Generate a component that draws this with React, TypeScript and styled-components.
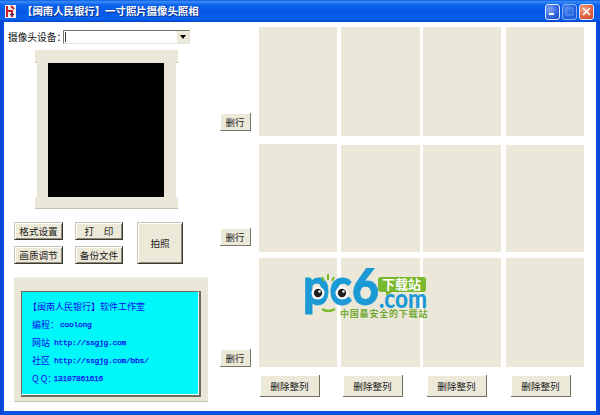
import React from "react";
import styled, { createGlobalStyle } from "styled-components";

const Global = createGlobalStyle`
  html, body { margin: 0; padding: 0; background: #fff; }
  body { font-family: "Noto Sans CJK SC", "Liberation Sans", sans-serif; }
`;

const Win = styled.div`
  position: relative;
  width: 600px;
  height: 415px;
  display: flex;
  flex-direction: column;
  overflow: hidden;
  background: linear-gradient(90deg, #0a3fd0 0, #0a55e4 4px, #0a55e4 596px, #0a3fd0 100%);
`;
const TitleBar = styled.div`
  height: 22px;
  flex: none;
  box-sizing: border-box;
  display: flex;
  align-items: center;
  padding: 0 6px 0 5px;
  gap: 6px;
  background: linear-gradient(180deg, #0a5ae6 0%, #3a8cf6 8%, #0a62ea 22%, #0558e6 60%, #0a62ee 85%, #0446cf 100%);
`;
const TitleText = styled.span`
  color: #fff;
  font-size: 10.4px;
  font-weight: 700;
  line-height: 14px;
  white-space: nowrap;
  text-shadow: 1px 1px 0 #0a2f90;
  flex: 1;
`;
const WinButtons = styled.div`
  display: flex;
  gap: 2px;
  margin-top: 1px;
`;
const WinBtn = styled.div<{ $close?: boolean; $off?: boolean }>`
  width: 15px;
  height: 16px;
  box-sizing: border-box;
  border: 1px solid #dfe8fb;
  border-radius: 3px;
  display: flex;
  align-items: center;
  justify-content: center;
  opacity: ${(p) => (p.$off ? 0.6 : 1)};
  background: ${(p) =>
    p.$close
      ? "radial-gradient(circle at 30% 30%, #f0a088, #e0603a 60%, #c8401f)"
      : "radial-gradient(circle at 30% 30%, #7fa4f4, #2f62e0 60%, #2450c8)"};
`;
const Client = styled.div`
  flex: none;
  margin: 0 4px;
  height: 389px;
  background: #fff;
  display: flex;
`;
const Left = styled.div`
  width: 216px;
  flex: none;
  box-sizing: border-box;
  padding: 8px 0 0 4px;
  display: flex;
  flex-direction: column;
`;
const DeviceRow = styled.div`
  display: flex;
  align-items: center;
  height: 14px;
`;
const DeviceLabel = styled.span`
  width: 55px;
  font-size: 9.7px;
  color: #111;
  white-space: nowrap;
`;
const Select = styled.div`
  width: 127px;
  height: 14px;
  box-sizing: border-box;
  border: 1px solid;
  border-color: #77756a #e6e4d8 #e6e4d8 #77756a;
  background: #fff;
  display: flex;
  justify-content: flex-end;
`;
const Caret = styled.span`
  width: 1px;
  height: 10px;
  margin: 1px auto 0 1px;
  background: #333;
`;
const Arrow = styled.div`
  width: 12px;
  background: #ece9d8;
  border-left: 1px solid #fff;
  display: flex;
  align-items: center;
  justify-content: center;
  &::after {
    content: "";
    border-left: 3px solid transparent;
    border-right: 3px solid transparent;
    border-top: 4px solid #000;
  }
`;
const PhotoFrame = styled.div`
  margin: 6px 0 0 27px;
  width: 143px;
  height: 158px;
  display: flex;
  flex-direction: column;
  align-items: center;
`;
const FrameBar = styled.div<{ $h: number }>`
  flex: none;
  width: 143px;
  height: ${(p) => p.$h}px;
  background: #ebe8da;
  box-shadow: 0 1px 0 #c4c1b2;
`;
const FrameMid = styled.div`
  flex: none;
  width: 139px;
  height: 135px;
  box-sizing: border-box;
  padding: 1px 12px 0 11px;
  background: #e9e6d8;
`;
const Screen = styled.div`
  width: 116px;
  height: 134px;
  background: #000;
`;
const Buttons = styled.div`
  margin: 14px 0 0 6px;
  display: grid;
  grid-template-columns: 49px 48px 48px;
  grid-template-rows: 18px 18px;
  column-gap: 12px;
  row-gap: 6px;
  & > :nth-child(3) { margin-left: 2px; grid-row: 1 / span 2; grid-column: 3; }
`;
const DarkBtn = styled.div`
  box-sizing: border-box;
  background: #ece9d8;
  border: 1px solid;
  border-color: #c8c5b4 #3c3a30 #3c3a30 #c8c5b4;
  box-shadow: inset 1px 1px 0 #fff, inset -1px -1px 0 #8e8b7c;
  display: flex;
  align-items: center;
  justify-content: center;
  font-size: 9.6px;
  color: #1a1a1a;
  white-space: pre;
`;
const Info = styled.div`
  margin: 13px 0 0 6px;
  width: 194px;
  height: 125px;
  box-sizing: border-box;
  padding: 13px 9px 7px 7px;
  background: #e9e6d8;
  border-top: 1px solid #f5f3ea;
  border-bottom: 1px solid #c8c5b4;
  display: flex;
`;
const CyanBox = styled.div`
  width: 178px;
  height: 104px;
  box-sizing: border-box;
  padding: 5px 0 0 6px;
  background: #00f8fb;
  border: 1px solid;
  border-color: #6c6a5c #fff #fff #6c6a5c;
  box-shadow: 1px 1px 0 1px #6c6a5c;
  color: #0a0af0;
  display: flex;
  flex-direction: column;
`;
const InfoLine = styled.div<{ $indent?: number }>`
  height: 18.2px;
  flex: none;
  padding-left: ${(p) => p.$indent ?? 4}px;
  display: flex;
  align-items: center;
  font-size: 9px;
  white-space: pre;
`;
const Mono = styled.span<{ $gap: number }>`
  font-family: "Liberation Mono", monospace;
  font-size: 8px;
  -webkit-text-stroke: 0.25px #0a0af0;
  letter-spacing: -0.3px;
  margin-left: ${(p) => p.$gap}px;
`;
const Right = styled.div`
  flex: none;
  width: 368px;
  padding-top: 5px;
  display: grid;
  grid-template-columns: 39px 82px 82px 83px 78px;
  grid-template-rows: 109px 110px 109px 24px;
  row-gap: 6px;
`;
const Cell = styled.div<{ $w: number; $top: number }>`
  width: ${(p) => p.$w}px;
  margin-top: ${(p) => p.$top}px;
  background: #ebe8da;
`;
const RowBtn = styled.div<{ $bottom: number }>`
  align-self: end;
  width: 31px;
  height: 18px;
  margin-bottom: ${(p) => p.$bottom}px;
  box-sizing: border-box;
  background: #ece9d8;
  border-right: 1px solid #77756a;
  border-bottom: 1px solid #77756a;
  box-shadow: inset 1px 1px 0 #fff;
  display: flex;
  align-items: center;
  justify-content: center;
  font-size: 9.4px;
  color: #1a1a1a;
`;
const ColBtn = styled.div<{ $left: number }>`
  width: 60px;
  height: 22px;
  margin: 2px 0 0 ${(p) => p.$left}px;
  box-sizing: border-box;
  background: #ece9d8;
  border-right: 1px solid #6f6d60;
  border-bottom: 1px solid #6f6d60;
  box-shadow: inset 1px 1px 0 #fff;
  display: flex;
  align-items: center;
  justify-content: center;
  font-size: 9.6px;
  color: #1a1a1a;
  white-space: nowrap;
`;
const Spacer = styled.div``;
const Logo = styled.svg`
  position: absolute;
  left: 300px;
  top: 268px;
`;

const AppIcon = () => (
  <svg width="11" height="13" viewBox="0 0 11 13" style={{ flex: "none" }}>
    <rect width="11" height="13" fill="#f4efe8" />
    <path d="M2 1v11M2 6h5v6M6 1l3 3" stroke="#c8202a" strokeWidth="2" fill="none" />
    <path d="M5 9.5h4" stroke="#20307a" strokeWidth="1.4" />
  </svg>
);

const rows = [
  { bottom: 5, first: 0, rest: 0 },
  { bottom: 6, first: 2, rest: 3 },
  { bottom: 0, first: 0, rest: 0 },
];

export default function App() {
  return (
    <Win>
      <Global />
      <TitleBar>
        <AppIcon />
        <TitleText>【闽南人民银行】一寸照片摄像头照相</TitleText>
        <WinButtons>
          <WinBtn>
            <svg width="9" height="9"><rect x="1" y="6" width="5" height="2" fill="#fff" /></svg>
          </WinBtn>
          <WinBtn $off>
            <svg width="9" height="9"><rect x="1" y="1" width="7" height="7" fill="none" stroke="#9fb8f0" /></svg>
          </WinBtn>
          <WinBtn $close>
            <svg width="9" height="9"><path d="M1 1l7 7M8 1l-7 7" stroke="#fff" strokeWidth="1.6" /></svg>
          </WinBtn>
        </WinButtons>
      </TitleBar>
      <Client>
        <Left>
          <DeviceRow>
            <DeviceLabel>摄像头设备：</DeviceLabel>
            <Select>
              <Caret />
              <Arrow />
            </Select>
          </DeviceRow>
          <PhotoFrame>
            <FrameBar $h={12} />
            <FrameMid>
              <Screen />
            </FrameMid>
            <FrameBar $h={11} />
          </PhotoFrame>
          <Buttons>
            <DarkBtn>格式设置</DarkBtn>
            <DarkBtn>打　印</DarkBtn>
            <DarkBtn>拍照</DarkBtn>
            <DarkBtn>画质调节</DarkBtn>
            <DarkBtn>备份文件</DarkBtn>
          </Buttons>
          <Info>
            <CyanBox>
              <InfoLine $indent={0}>【闽南人民银行】软件工作室</InfoLine>
              <InfoLine>编程：<Mono $gap={1}>coolong</Mono></InfoLine>
              <InfoLine>网站<Mono $gap={4}>http://ssgjg.com</Mono></InfoLine>
              <InfoLine>社区<Mono $gap={4}>http://ssgjg.com/bbs/</Mono></InfoLine>
              <InfoLine>Q Q：<Mono $gap={-3}>13107861616</Mono></InfoLine>
            </CyanBox>
          </Info>
        </Left>
        <Right>
          {rows.map((r, i) => (
            <React.Fragment key={i}>
              <RowBtn $bottom={r.bottom}>删行</RowBtn>
              {[0, 1, 2, 3].map((j) => (
                <Cell key={j} $w={j === 1 ? 79 : 78} $top={j === 0 ? r.first : r.rest} />
              ))}
            </React.Fragment>
          ))}
          <Spacer />
          <ColBtn $left={1}>删除整列</ColBtn>
          <ColBtn $left={2}>删除整列</ColBtn>
          <ColBtn $left={4}>删除整列</ColBtn>
          <ColBtn $left={5}>删除整列</ColBtn>
        </Right>
      </Client>
      <Logo width="130" height="55" viewBox="0 0 130 55">
        <text x="3" y="37" fontFamily="Lato" fontWeight="900" fontSize="52" fill="#1b9ad6" stroke="#1b9ad6" strokeWidth="0.8" textLength="76" lengthAdjust="spacingAndGlyphs">pc6</text>
        <circle cx="18" cy="25" r="6.5" fill="#fff" />
        <circle cx="42" cy="25" r="6.5" fill="#fff" />
        <circle cx="18" cy="25" r="4.2" fill="#1f1f1f" />
        <circle cx="42" cy="25" r="4.2" fill="#1f1f1f" />
        <circle cx="19.5" cy="23.5" r="1.2" fill="#fff" />
        <circle cx="43.5" cy="23.5" r="1.2" fill="#fff" />
        <path d="M22 9l2 4M28 6v6M34 9l-2 4" stroke="#7ab82e" strokeWidth="2" fill="none" />
        <path d="M22 41q6 4 13 0" stroke="#7ab82e" strokeWidth="2.4" fill="none" />
        <path d="M81 9h42a3 3 0 0 1 3 3v9a3 3 0 0 1-3 3H92l-6 4v-4h-5a3 3 0 0 1-3-3v-9a3 3 0 0 1 3-3z" fill="#7ab82e" />
        <text x="82" y="21" fontFamily="Noto Sans CJK SC" fontWeight="700" fontSize="13" fill="#fff">下载站</text>
        <text x="79" y="40" fontFamily="Lato" fontWeight="900" fontSize="26" fill="#1b9ad6" textLength="48" lengthAdjust="spacingAndGlyphs">.com</text>
        <text x="40" y="49" fontFamily="Noto Sans CJK SC" fontWeight="700" fontSize="9" letterSpacing="0.8" fill="#74a832">中国最安全的下载站</text>
      </Logo>
    </Win>
  );
}
